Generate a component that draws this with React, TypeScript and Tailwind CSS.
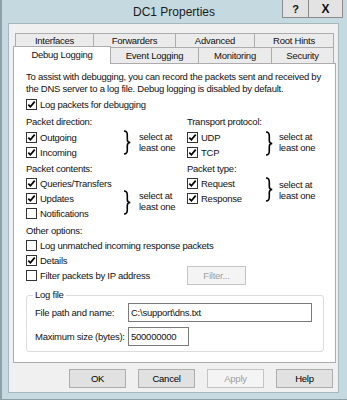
import React from "react";

const Check = ({ checked, label }: { checked?: boolean; label: string }) => (
  <div className="flex items-center h-[15px] whitespace-nowrap">
    <span className="w-[11px] h-[11px] shrink-0 border border-[#333333] bg-white flex items-center justify-center">
      {checked && (
        <svg width="9" height="9" viewBox="0 0 9 9">
          <path d="M1.3 4.6 L3.4 6.8 L7.7 1.6" fill="none" stroke="#000" strokeWidth="1.7" />
        </svg>
      )}
    </span>
    <span className="ml-[3px]">{label}</span>
  </div>
);

const Brace = ({ className }: { className: string }) => (
  <svg className={className} width="8" height="25" viewBox="0 0 8 25">
    <path
      d="M1 1 C4 1 4.3 2.5 4.3 5 L4.3 9.5 C4.3 11.5 5.3 12.5 7.3 12.5 C5.3 12.5 4.3 13.5 4.3 15.5 L4.3 20 C4.3 22.5 4 24 1 24"
      fill="none"
      stroke="#000"
      strokeWidth="1.6"
    />
  </svg>
);

const SelectNote = ({ className }: { className: string }) => (
  <div className={`leading-[11px] whitespace-nowrap ${className}`}>
    select at
    <br />
    least one
  </div>
);

const Tab = ({ label, w }: { label: string; w: string }) => (
  <div className={`${w} h-full -ml-px first:ml-0 border border-b-0 border-[#acacac] bg-[#ebebeb] flex items-center justify-center`}>
    {label}
  </div>
);

const DlgButton = ({ label, disabled }: { label: string; disabled?: boolean }) => (
  <button
    className={`w-[57px] h-[19px] border flex items-center justify-center ${
      disabled ? "bg-[#f4f4f4] border-[#c4c4c4] text-[#a0a0a0]" : "bg-[#e1e1e1] border-[#adadad] text-black"
    }`}
  >
    {label}
  </button>
);

export default function App() {
  return (
    <div className="w-[347px] h-[400px] overflow-hidden bg-[#c4d9e0] border-l-2 border-b border-[#8ea1a8] flex flex-col font-['Liberation_Sans',Arial,sans-serif] text-[9.5px] tracking-[-0.25px] leading-[12px] text-[#111]">
      {/* Title bar */}
      <div className="h-[23px] shrink-0 flex">
        <div className="w-[64px]" />
        <div className="flex-1 flex items-center justify-center text-[12px] tracking-normal text-[#1b1b1b]">
          DC1 Properties
        </div>
        <div className="flex items-start mr-[4px] tracking-normal">
          <div className="w-[27px] h-[18px] bg-[#e3e3e3] border border-t-0 border-[#8b8b8b] flex items-center justify-center font-bold text-[11px]">
            ?
          </div>
          <div className="w-[35px] h-[18px] -ml-px bg-[#e3e3e3] border border-t-0 border-[#8b8b8b] flex items-center justify-center font-bold text-[12px]">
            X
          </div>
        </div>
      </div>

      {/* Client area */}
      <div className="ml-[6px] mr-[8px] h-[370px] shrink-0 border border-[#a5b6bc] bg-[#f0f0f0] flex flex-col pt-[9px]">
        {/* Tabs, back row */}
        <div className="flex h-[14px] pl-[6px]">
          <Tab label="Interfaces" w="w-[79px]" />
          <Tab label="Forwarders" w="w-[83px]" />
          <Tab label="Advanced" w="w-[80px]" />
          <Tab label="Root Hints" w="w-[80px]" />
        </div>
        {/* Tabs, front row */}
        <div className="flex items-end h-[16px] pl-[4px]">
          <div className="relative z-10 w-[98px] h-[18px] -mb-px bg-white border border-b-0 border-[#acacac] flex items-center justify-center pb-[2px]">
            Debug Logging
          </div>
          <div className="w-[89px] h-full -ml-px border border-b-0 border-[#acacac] bg-[#ebebeb] flex items-center justify-center">
            Event Logging
          </div>
          <div className="w-[74px] h-full -ml-px border border-b-0 border-[#acacac] bg-[#ebebeb] flex items-center justify-center">
            Monitoring
          </div>
          <div className="w-[63px] h-full -ml-px border border-b-0 border-[#acacac] bg-[#ebebeb] flex items-center justify-center">
            Security
          </div>
        </div>

        {/* Tab panel */}
        <div className="ml-[4px] w-[323px] h-[300px] shrink-0 border border-[#acacac] bg-white pl-[12px] pt-[7px]">
          <p className="leading-[12px] whitespace-nowrap">
            To assist with debugging, you can record the packets sent and received by
            <br />
            the DNS server to a log file. Debug logging is disabled by default.
          </p>
          <div className="mt-[2px]">
            <Check checked label="Log packets for debugging" />
          </div>

          <div className="flex mt-[4px] h-[12px]">
            <div className="w-[161px]">Packet direction:</div>
            <div>Transport protocol:</div>
          </div>
          <div className="flex mt-[2px]">
            <div className="w-[161px] flex">
              <div className="w-[97px]">
                <Check checked label="Outgoing" />
                <Check checked label="Incoming" />
              </div>
              <Brace className="mt-0" />
              <SelectNote className="ml-[8px] mt-[1px]" />
            </div>
            <div className="flex">
              <div className="w-[78px]">
                <Check checked label="UDP" />
                <Check checked label="TCP" />
              </div>
              <Brace className="mt-[1px]" />
              <SelectNote className="ml-[6px] mt-[1px]" />
            </div>
          </div>

          <div className="flex mt-[3px] h-[12px]">
            <div className="w-[161px]">Packet contents:</div>
            <div>Packet type:</div>
          </div>
          <div className="flex mt-[1px]">
            <div className="w-[161px] flex">
              <div className="w-[97px]">
                <Check checked label="Queries/Transfers" />
                <Check checked label="Updates" />
                <Check label="Notifications" />
              </div>
              <Brace className="mt-[14px]" />
              <SelectNote className="ml-[8px] mt-[14px]" />
            </div>
            <div className="flex">
              <div className="w-[78px]">
                <Check checked label="Request" />
                <Check checked label="Response" />
              </div>
              <Brace className="mt-[1px]" />
              <SelectNote className="ml-[6px] mt-[3px]" />
            </div>
          </div>

          <div className="mt-[4px] h-[12px]">Other options:</div>
          <div className="mt-[1px]">
            <Check label="Log unmatched incoming response packets" />
            <Check checked label="Details" />
            <div className="flex items-center h-[15px]">
              <div className="w-[161px]">
                <Check label="Filter packets by IP address" />
              </div>
              <button className="w-[59px] h-[19px] shrink-0 bg-[#f4f4f4] border border-[#c4c4c4] text-[#a0a0a0] flex items-center justify-center">
                Filter...
              </button>
            </div>
          </div>

          <fieldset className="mt-[6px] w-[298px] border border-[#dcdcdc] rounded-[3px] pl-[8px] pb-[5px]">
            <legend className="ml-[-2px] px-[2px] leading-[12px]">Log file</legend>
            <div className="flex items-center mt-[2px]">
              <div className="w-[93px] whitespace-nowrap">File path and name:</div>
              <div className="w-[184px] h-[19px] border border-[#7a7a7a] bg-white flex items-center pl-[2px]">
                C:\support\dns.txt
              </div>
            </div>
            <div className="flex items-center mt-[5px]">
              <div className="w-[93px] whitespace-nowrap">Maximum size (bytes):</div>
              <div className="w-[61px] h-[19px] border border-[#7a7a7a] bg-white flex items-center pl-[2px]">
                500000000
              </div>
            </div>
          </fieldset>
        </div>

        {/* Dialog buttons */}
        <div className="flex justify-end gap-[12px] pr-[5px] mt-[6px]">
          <DlgButton label="OK" />
          <DlgButton label="Cancel" />
          <DlgButton label="Apply" disabled />
          <DlgButton label="Help" />
        </div>
      </div>
    </div>
  );
}
